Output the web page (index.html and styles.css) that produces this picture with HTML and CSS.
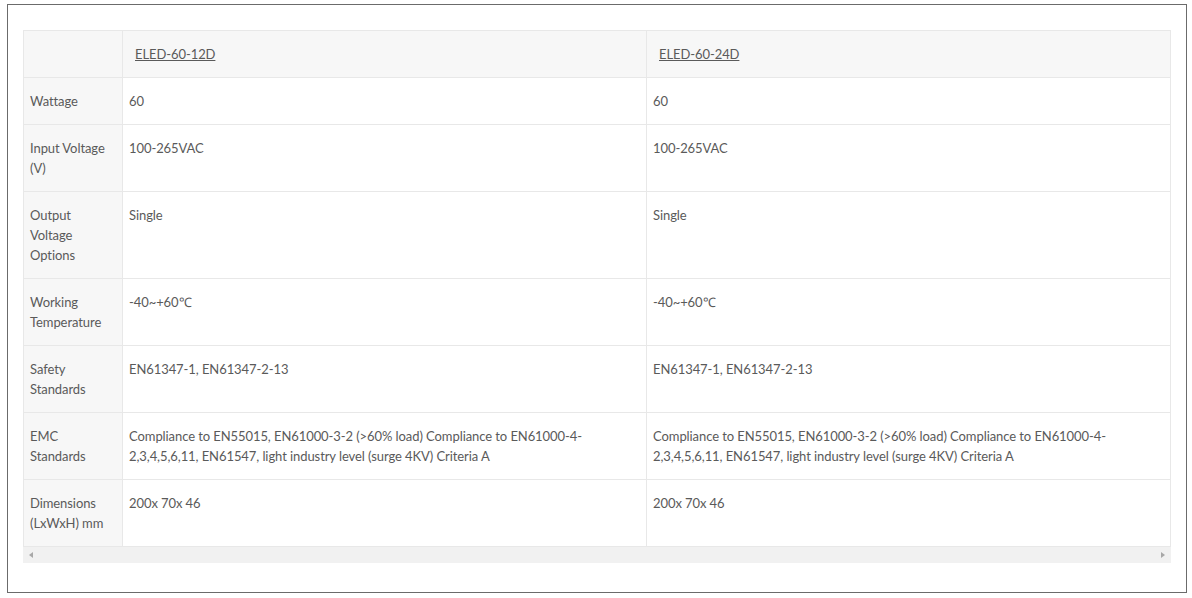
FILE: index.html
```html
<!DOCTYPE html>
<html lang="en">
<head>
  <meta charset="UTF-8">
  <title>ELED-60 Specifications</title>
  <link rel="stylesheet" href="styles.css">
</head>
<body>
<div class="frame">
  <div class="table-wrap">
    <table class="spec">
      <colgroup>
        <col class="col-label">
        <col class="col-model">
        <col class="col-model">
      </colgroup>
      <thead>
        <tr>
          <th class="label"></th>
          <th><a href="#">ELED-60-12D</a></th>
          <th><a href="#">ELED-60-24D</a></th>
        </tr>
      </thead>
      <tbody>
        <tr>
          <td class="label">Wattage</td>
          <td>60</td>
          <td>60</td>
        </tr>
        <tr>
          <td class="label">Input Voltage (V)</td>
          <td>100-265VAC</td>
          <td>100-265VAC</td>
        </tr>
        <tr>
          <td class="label">Output Voltage Options</td>
          <td>Single</td>
          <td>Single</td>
        </tr>
        <tr>
          <td class="label">Working Temperature</td>
          <td>-40~+60℃</td>
          <td>-40~+60℃</td>
        </tr>
        <tr>
          <td class="label">Safety Standards</td>
          <td>EN61347-1, EN61347-2-13</td>
          <td>EN61347-1, EN61347-2-13</td>
        </tr>
        <tr>
          <td class="label">EMC Standards</td>
          <td>Compliance to EN55015, EN61000-3-2 (&gt;60% load) Compliance to EN61000-4-2,3,4,5,6,11, EN61547, light industry level (surge 4KV) Criteria A</td>
          <td>Compliance to EN55015, EN61000-3-2 (&gt;60% load) Compliance to EN61000-4-2,3,4,5,6,11, EN61547, light industry level (surge 4KV) Criteria A</td>
        </tr>
        <tr>
          <td class="label">Dimensions (LxWxH) mm</td>
          <td>200x 70x 46</td>
          <td>200x 70x 46</td>
        </tr>
      </tbody>
    </table>
    <!-- fake horizontal scrollbar, like the original -->
    <div class="scrollbar">
      <span class="arrow arrow-left"></span>
      <span class="arrow arrow-right"></span>
    </div>
  </div>
</div>
</body>
</html>
```

FILE: styles.css
```css
body {
  font-family: Lato, "Open Sans", Arial, sans-serif;
  margin: 0;
  padding: 0;
  background-color: #fff;
}

.frame {
  box-sizing: border-box;
  width: 1180px;
  height: 589px;
  margin: 4px 0 0 7px;
  padding: 25px 15px 0 15px;
  border: 1px solid #6b6b6b;
}

.table-wrap {
  width: 1148px;
}

.spec {
  width: 1148px;
  table-layout: fixed;
  border-collapse: collapse;
  font-size: 13px;
  line-height: 20px;
  letter-spacing: -0.08px;
  color: #5a5a5a;
}

.col-label {
  width: 99px;
}

.col-model {
  width: 524px;
}

.spec th, .spec td {
  padding: 13px 6px;
  text-align: left;
  vertical-align: top;
  border: 1px solid #e8e8e8;
}

.spec th {
  font-weight: normal;
  background-color: #f7f7f7;
  padding-left: 12px;
}

.spec th a {
  color: #5a5a5a;
  text-decoration: underline;
}

.spec .label {
  background-color: #f7f7f7;
}

.scrollbar {
  position: relative;
  height: 16px;
  background-color: #f1f1f1;
}

.arrow {
  position: absolute;
  top: 5px;
  width: 0;
  height: 0;
  border-top: 3px solid transparent;
  border-bottom: 3px solid transparent;
}

.arrow-left {
  left: 6px;
  border-right: 4px solid #a8a8a8;
}

.arrow-right {
  right: 6px;
  border-left: 4px solid #a8a8a8;
}
```
